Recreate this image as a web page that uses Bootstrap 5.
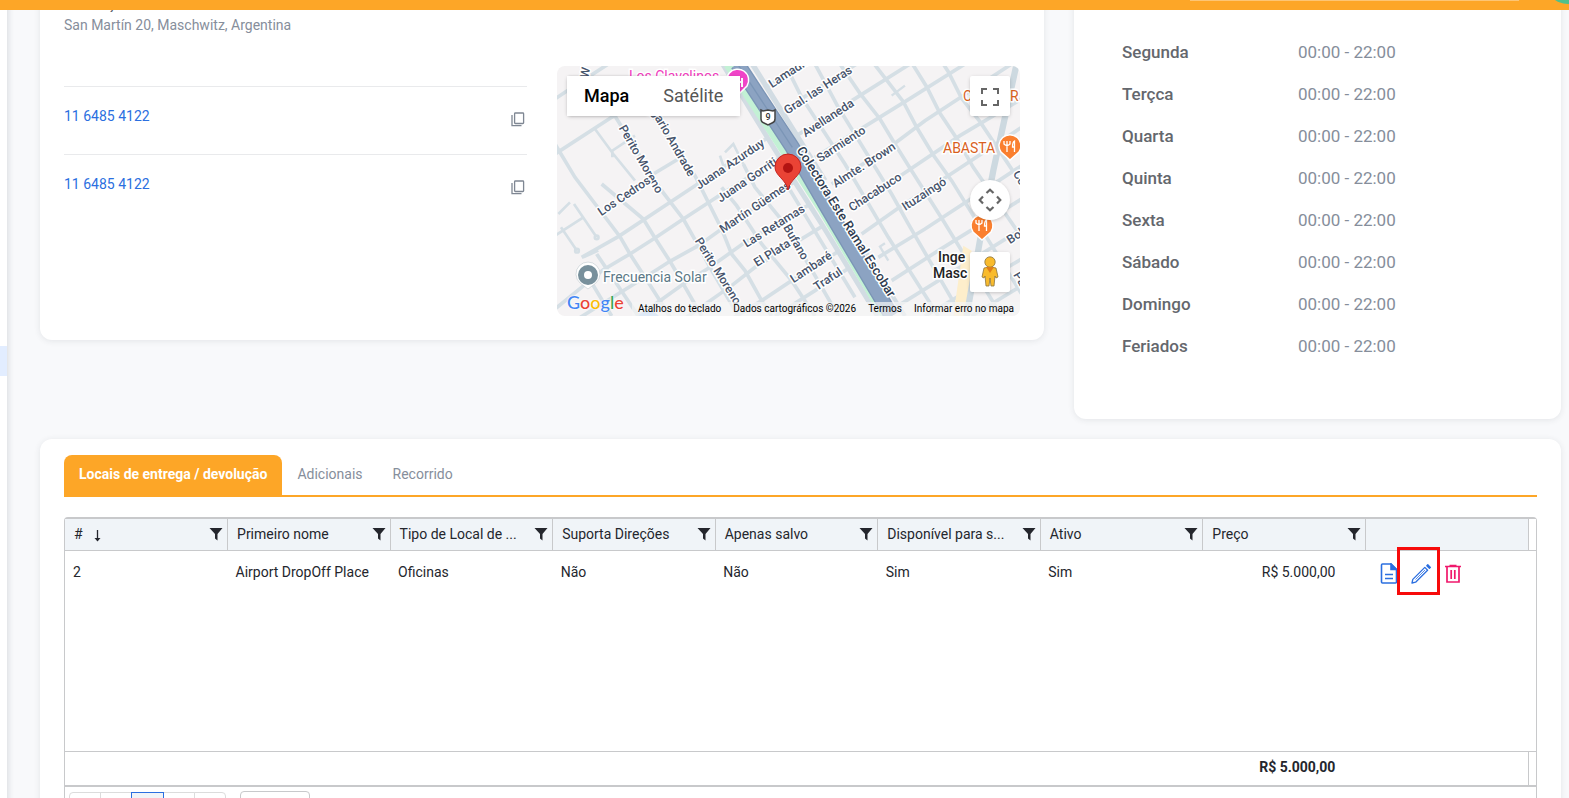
<!DOCTYPE html>
<html lang="pt">
<head>
<meta charset="utf-8">
<meta name="viewport" content="width=device-width, initial-scale=1">
<title>Local</title>
<link href="https://cdn.jsdelivr.net/npm/bootstrap@5.3.0/dist/css/bootstrap.min.css" rel="stylesheet">
<style>
:root{--brand:#fda627;--line:#c8c9cb;--link:#2b6fe0;--muted:#868e9b}
body{font-family:Roboto,"Open Sans",sans-serif;font-size:14px;line-height:20px;color:#24262d;background:#f8f9fb;height:100vh;overflow:hidden}
.topbar{height:10px;background:var(--brand);overflow:hidden}
.search-edge{width:21%;height:1px;margin-right:50px;background:#fdc574}
.avatar-edge{right:-22px;top:-42px;width:46px;height:46px;background:#4fc08d}
.side{width:7px;background:#fff;box-shadow:1px 0 6px rgba(40,50,60,.16);padding-top:346px}
.side-item{height:30px;background:#e2edff}
.content-area{padding:0 8px 0 33px;min-width:0}
.row-wide{--bs-gutter-x:30px}
.panel{background:#fff;border-radius:12px;box-shadow:0 1px 6px rgba(40,50,60,.1)}
.panel.cut{border-top-left-radius:0;border-top-right-radius:0}
.info-panel{padding:0 24px 24px}
.info-head{height:66px}
.info-head dt{font-weight:500;color:#5d6068;line-height:20px;margin-top:-6px}
.info-head dd{color:var(--muted);line-height:22px}
.phones{padding-top:20px}
.phone-row{border-top:1px solid #e9eaec;height:68px;padding:19px 0 0}
.phone-row a{color:var(--link)}
.icon-btn{border:0;background:none;padding:0;display:inline-flex}
.phone-row .icon-btn{margin:6px 2px 0 0}
.hours-panel{padding:31px 48px 52px}
.hours{font-size:17px;line-height:26px}
.hours th,.hours td{padding:8px 0;font-weight:400;color:var(--muted)}
.hours th{font-weight:500;color:#64676d;width:45%}
.map-box{height:250px;border-radius:8px;overflow:hidden;background:#f5f3f4}
.map-ctl{background:#fff;border:0;box-shadow:0 1px 4px -1px rgba(0,0,0,.3);padding:0}
.map-type{left:10px;top:10px;height:40px;border-radius:2px;font-size:18px}
.map-type button{border:0;background:#fff;padding:0 17px;color:#565656}
.map-type button:first-child{font-weight:500;color:#000;box-shadow:1px 0 2px rgba(0,0,0,.12)}
.sq{width:40px;height:40px;right:10px;border-radius:2px}
.sq-full{top:10px}
.sq-cam{top:114px}
.sq-peg{top:186px}
.legend{right:0;bottom:0;font-size:10px;line-height:14px;background:rgba(245,245,245,.7)}
.legend>*{padding:0 6px;border:0;background:none;color:#000;text-decoration:none;white-space:nowrap}
.glogo{left:10px;bottom:2px;font-family:Lato,sans-serif;font-weight:500;font-size:18px;line-height:24px;text-shadow:0 0 2px #fff,0 0 2px #fff}
.glogo .c1{color:#4285f4}
.glogo .c2{color:#ea4335}
.glogo .c3{color:#fbbc04}
.glogo .c4{color:#34a853}
.grid-panel{margin-top:20px;padding:16px 24px 40px}
.tabs{border-bottom:2px solid var(--brand);margin-bottom:20px}
.tabs button{border:0;background:none;height:40px;padding:0 15px 2px;color:var(--muted)}
.tabs .active{background:var(--brand);color:#fff;font-weight:700;border-radius:8px 8px 0 0}
.datagrid{border:1px solid var(--line);border-top:2px solid var(--line);border-radius:4px 4px 0 0}
.datagrid table{table-layout:fixed;margin:0}
.datagrid thead th{height:31px;background:#f0f4f8;border-right:1px solid var(--line);border-bottom:1px solid var(--line);font-weight:400;padding:0 4px 0 9px}
.datagrid thead th.gutter,.datagrid tfoot td.gutter{background:#fff;border-right:0;padding:0;border-left:0}
.datagrid tbody td{height:44px;padding:0 8px}
.datagrid tbody .blank td{height:157px}
.datagrid td.money{padding-right:30px;text-align:right}
.datagrid tfoot td{height:35px;border-top:1px solid var(--line);border-bottom:2px solid var(--line);font-weight:700;padding:0 0 2px}
.datagrid tfoot td.acts{border-right:1px solid var(--line)}
.gutter{width:8px}
.row-acts{gap:12px;padding:3px 0 0 7px}
.marker{width:43px;height:48px;left:32px;top:-4px;border:3px solid #f70b0b;pointer-events:none}
.pager{padding:5px 4px;gap:15px}
.pages button{width:32px;height:30px;border:1px solid #dcdcdc;background:#fff;margin-right:-1px;padding:0}
.pages button:first-child{border-radius:4px 0 0 4px}
.pages button:last-child{border-radius:0 4px 4px 0}
.pages .now{width:33px;border-color:var(--link);background:#f0f4f8;position:relative}
.pager select{width:70px;height:32px;margin-top:-1px;border:1px solid var(--line);border-radius:4px;background:#fff}
.st{fill:#46536b;font-size:12px;font-weight:500;text-anchor:middle;stroke:#fff;stroke-width:3px;stroke-linejoin:round;paint-order:stroke}
.st .main-road{font-size:13px;fill:#2e3a4e}
.poi{stroke:#fff;stroke-width:3px;paint-order:stroke;font-size:14px}
</style>
</head>
<body>
<header class="topbar fixed-top d-flex justify-content-end"><div class="search-edge"></div><span class="avatar-edge position-absolute rounded-circle"></span></header>
<div class="d-flex min-vh-100">
<aside class="side flex-shrink-0"><div class="side-item"></div></aside>
<main class="content-area flex-grow-1">
<div class="row row-wide align-items-start">
<div class="col-8">
<section class="panel cut info-panel">
<dl class="info-head mb-0 overflow-hidden"><dt>Endereço</dt><dd class="mb-0">San Martín 20, Maschwitz, Argentina</dd></dl>
<div class="row row-wide">
<div class="col-6"><div class="phones">
<div class="phone-row d-flex justify-content-between align-items-start"><a class="text-decoration-none" href="#">11 6485 4122</a><button class="icon-btn" aria-label="Copiar"><svg width="14" height="15" viewBox="0 0 14 15" fill="none" stroke="#7f8793" stroke-width="1.3"><rect x="3.6" y="1" width="9" height="10.5" rx=".8"/><path d="M1 3v10.600h9.500"/></svg></button></div>
<div class="phone-row d-flex justify-content-between align-items-start"><a class="text-decoration-none" href="#">11 6485 4122</a><button class="icon-btn" aria-label="Copiar"><svg width="14" height="15" viewBox="0 0 14 15" fill="none" stroke="#7f8793" stroke-width="1.3"><rect x="3.6" y="1" width="9" height="10.5" rx=".8"/><path d="M1 3v10.600h9.500"/></svg></button></div>
</div></div>
<div class="col-6"><div class="map-box position-relative">
<svg class="d-block w-100 h-100" viewBox="0 0 463 250" preserveAspectRatio="xMidYMid slice">
<defs>
<clipPath id="west"><path d="M0 0H505L600 160L730 370L960 756H0Z"/></clipPath>
<clipPath id="east"><path d="M590 0L730 230L1050 756H1400V0Z"/></clipPath>
</defs>
<g transform="translate(-2 -2) scale(.3333)" fill="none">
<g clip-path="url(#west)" stroke="#d5dfe5" stroke-width="11">
<path d="M80 580L190 518L410 372L670 200M0 735L145 617L225 570L300 522L385 465L500 390L700 265M60 770L270 640L345 592L430 545L500 495L740 340M230 770L315 710L385 660L465 610L570 535L800 400M380 770L530 665L600 610L830 470M490 790L620 710L710 650L870 550M660 756L780 680L900 600M0 270L170 160L270 100M0 105L30 85L160 0M270 345L370 285"/>
<path d="M0 240L60 340L195 518L225 570L270 640L315 710L345 760M125 570L250 756M140 360L265 465L300 522L345 592L385 660L440 756M170 140L320 380L385 465L430 545L465 610L550 756M290 150L420 335L500 495L530 570L570 620L620 710L650 756M500 370L545 425L620 540L710 650L780 756M565 300L600 370L690 480L760 600L850 756M700 370L900 700M100 640L170 756"/>
<path stroke-width="8" d="M120 195L175 270L240 350M172 280V260L240 215M495 275L510 320M510 265L535 240L565 300M0 515L85 460M57 420L125 520M18 490L66 560M10 450L45 415M85 580L130 560"/>
<circle cx="125" cy="520" r="4"/><circle cx="66" cy="560" r="4"/>
</g>
<g clip-path="url(#east)" stroke="#d5dfe5" stroke-width="11">
<path d="M640 66L740 0M690 135L905 0M725 215L930 85L1065 0M780 280L925 190L1055 110L1230 0M830 360L1010 245L1110 170L1370 0M880 430L1030 340L1215 215L1400 105M920 510L1040 425L1165 345L1400 190M970 580L1110 495L1400 305M1010 650L1150 560L1400 405M1030 725L1400 495M1110 756L1400 585M1250 756L1400 665"/>
<path d="M700 20L740 100L870 300L1000 520L1150 756M780 0L850 130L1010 390L1060 480L1220 756M855 0L915 88L975 165L1020 240L1070 320L1165 470L1340 756M950 -10L1045 113L1088 195L1135 273L1190 350L1400 690M1060 -20L1115 68L1155 148L1205 223L1255 310L1400 520M1145 -30L1180 23L1220 103L1275 173L1400 360"/>
<path stroke-width="7" d="M1010 95L1050 65M1000 590L975 548L990 538"/>
</g>
<path d="M1225 545L1250 560L1245 756H1195Z" fill="#fdeecb"/>
<path d="M1385 0L1315 320L1275 530L1235 756" stroke="#cdd9e0" stroke-width="19"/>
<path d="M250 756Q280 725 312 756Z" fill="#a9cdf9"/>
<path d="M503 0L600 160L730 370L800 480L968 756" stroke="#d2dce3" stroke-width="15"/>
<path d="M520 0L618 150L696 270L805 440L992 756" stroke="#c3f1d5" stroke-width="30"/>
<path d="M592 0L735 230L810 350" stroke="#d2dce3" stroke-width="16"/>
<path d="M930 560L1050 756" stroke="#d2dce3" stroke-width="12"/>
<path d="M548 0L712 250L822 440L1010 756" stroke="#7b95b6" stroke-width="46"/>
<path d="M548 0L712 250L822 440L1010 756" stroke="#8ca3c2" stroke-width="38"/>
<path d="M548 0L712 250" stroke="#7b95b6" stroke-width="4"/>
</g>
<g class="st">
<text transform="translate(84 93) rotate(60)" y="4">Perito Moreno</text>
<text transform="translate(112 69) rotate(60)" y="4">Olegario Andrade</text>
<text transform="translate(173 98) rotate(-34)" y="4">Juana Azurduy</text>
<text transform="translate(190 114) rotate(-34)" y="4">Juana Gorriti</text>
<text transform="translate(198 141) rotate(-34)" y="4">Martín Güemes</text>
<text transform="translate(67 130) rotate(-34)" y="4">Los Cedros</text>
<text transform="translate(217 160) rotate(-32)" y="4">Las Retamas</text>
<text transform="translate(215 187) rotate(-32)" y="4">El Plata</text>
<text transform="translate(239 176) rotate(60)" y="4">Bufano</text>
<text transform="translate(254 201) rotate(-33)" y="4">Lambaré</text>
<text transform="translate(271 213) rotate(-33)" y="4">Traful</text>
<text transform="translate(161 205) rotate(58)" y="4">Perito Moreno</text>
<text transform="translate(261 24) rotate(-33)" y="4">Gral. las Heras</text>
<text transform="translate(234 5) rotate(-33)" y="4">Lamadrid</text>
<text transform="translate(271 52) rotate(-33)" y="4">Avellaneda</text>
<text transform="translate(284 78) rotate(-33)" y="4">Sarmiento</text>
<text transform="translate(307 99) rotate(-33)" y="4">Almte. Brown</text>
<text transform="translate(318 126) rotate(-33)" y="4">Chacabuco</text>
<text transform="translate(367 128) rotate(-33)" y="4">Ituzaingó</text>
<text transform="translate(466 165) rotate(-33)" y="4">Bolívia</text>
<text transform="translate(467 119) rotate(60)" y="4">Colón</text>
<text transform="translate(469 223) rotate(60)" y="4">Paraná</text>
<text transform="translate(29 2) rotate(-80)" y="4">W c</text>
<text class="main-road" transform="translate(289 156) rotate(58)" y="4">Colectora Este Ramal Escobar</text>
</g>
<g class="poi">
<text x="72" y="15" fill="#f13bbd">Los Clavelinos</text>
<text x="406" y="35" fill="#d95f1e">C</text><text x="453" y="35" fill="#d95f1e">R</text>
<text x="386" y="87" fill="#d95f1e">ABASTA</text>
<text x="46" y="216" fill="#5b7886">Frecuencia Solar</text>
<g font-weight="500" fill="#222"><text x="381" y="196">Inge</text><text x="376" y="212">Masc</text></g>
</g>
<g stroke="#fff" stroke-width="1.500">
<path d="M180 30L173 22A11 11 0 1 1 190 20Z" fill="#f044c8"/>
<path d="M453 94L444 86A11 11 0 1 1 462 86Z" fill="#fa7f2f"/>
<path d="M425 174L416 166A11 11 0 1 1 434 166Z" fill="#fa7f2f"/>
</g>
<path d="M31 223L23 217A12 12 0 1 1 39 217Z" fill="#fff" stroke="#bfc8cc" stroke-width=".6"/>
<circle cx="31" cy="209" r="10" fill="#78909c"/><circle cx="31" cy="209" r="4" fill="#fff"/>
<path d="M176 11v10M185 12v9M176 16h8" stroke="#fff" stroke-width="2"/>
<g fill="none" stroke="#fff" stroke-width="1.300"><path d="M447 75v3q3 3 6 0v-3M450 75v11M457.500 86V75q-2 1-2 6h2"/><path d="M419 154v3q3 3 6 0v-3M422 154v11M429.500 165V154q-2 1-2 6h2"/></g>
<path d="M204 44l2 1 5-1 5 1 2-1v9q0 3-3 4l-4 2-4-2q-3-1-3-4z" fill="#fff" stroke="#444" stroke-width="1.500"/>
<text x="211" y="54" font-size="9" font-weight="500" text-anchor="middle" fill="#333">9</text>
<path d="M231 124C229 113 218 110 218 101A13 13 0 0 1 244 101C244 110 233 113 231 124Z" fill="#ea4335" stroke="#c5221f"/>
<circle cx="231" cy="102" r="5" fill="#b31412"/>
</svg>
<div class="map-ctl map-type position-absolute d-flex"><button>Mapa</button><button>Satélite</button></div>
<button class="map-ctl sq sq-full position-absolute" aria-label="Tela cheia"><svg width="18" height="18" viewBox="0 0 18 18" fill="#666"><path d="M0 0v6h2V2h4V0H0zm16 0h-4v2h4v4h2V0h-2zm0 16h-4v2h6v-6h-2v4zM2 12H0v6h6v-2H2v-4z"/></svg></button>
<button class="map-ctl sq sq-cam position-absolute rounded-circle" aria-label="Controles da câmera"><svg width="24" height="24" viewBox="0 0 24 24" fill="none" stroke="#666" stroke-width="2.200"><path d="M8.500 5L12 1.700 15.500 5M8.500 19L12 22.300 15.500 19M5 8.500L1.700 12 5 15.500M19 8.500L22.300 12 19 15.500"/></svg></button>
<button class="map-ctl sq sq-peg position-absolute" aria-label="Street View"><svg width="20" height="32" viewBox="0 0 20 32"><g fill="#f9bb2d" stroke="#8a7440" stroke-width=".8"><path d="M4 12q6-2 12 0l2 9-2 1-1-2-1 10h-3l-1-8-1 8H6L5 20l-1 2-2-1z"/><circle cx="10" cy="6" r="5.200"/></g><path d="M6 11h8l-4 6z" fill="#e07f1a"/></svg></button>
<div class="glogo position-absolute" aria-label="Google"><span class="c1">G</span><span class="c2">o</span><span class="c3">o</span><span class="c1">g</span><span class="c4">l</span><span class="c2">e</span></div>
<div class="legend position-absolute d-flex"><button>Atalhos do teclado</button><span>Dados cartográficos ©2026</span><a href="#">Termos</a><a href="#">Informar erro no mapa</a></div>
</div></div>
</div>
</section>
</div>
<div class="col-4">
<section class="panel cut hours-panel">
<table class="hours w-100"><tbody>
<tr><th scope="row">Segunda</th><td>00:00 - 22:00</td></tr>
<tr><th scope="row">Terçca</th><td>00:00 - 22:00</td></tr>
<tr><th scope="row">Quarta</th><td>00:00 - 22:00</td></tr>
<tr><th scope="row">Quinta</th><td>00:00 - 22:00</td></tr>
<tr><th scope="row">Sexta</th><td>00:00 - 22:00</td></tr>
<tr><th scope="row">Sábado</th><td>00:00 - 22:00</td></tr>
<tr><th scope="row">Domingo</th><td>00:00 - 22:00</td></tr>
<tr><th scope="row">Feriados</th><td>00:00 - 22:00</td></tr>
</tbody></table>
</section>
</div>
</div>
<section class="panel grid-panel">
<div class="tabs d-flex" role="tablist"><button class="active" role="tab">Locais de entrega / devolução</button><button role="tab">Adicionais</button><button role="tab">Recorrido</button></div>
<div class="datagrid">
<svg class="d-none"><symbol id="funnel" viewBox="0 0 14 14"><path d="M.500 1h13L8.500 7v6.500L6 11.500V7z" fill="#24262d"/></symbol></svg>
<table class="w-100">
<colgroup><col><col><col><col><col><col><col><col><col><col class="gutter"></colgroup>
<thead><tr>
<th><div class="d-flex align-items-center"><span class="flex-grow-1">#&nbsp;&nbsp; <svg width="9" height="12" viewBox="0 0 9 12" fill="none" stroke="#24262d" stroke-width="1.300"><path d="M4.500 0v10"/><path d="M1.500 8h6l-3 3.500z" fill="#24262d" stroke="none"/></svg></span><svg width="14" height="14"><use href="#funnel"/></svg></div></th>
<th><div class="d-flex align-items-center"><span class="flex-grow-1">Primeiro nome</span><svg width="14" height="14"><use href="#funnel"/></svg></div></th>
<th><div class="d-flex align-items-center"><span class="flex-grow-1">Tipo de Local de ...</span><svg width="14" height="14"><use href="#funnel"/></svg></div></th>
<th><div class="d-flex align-items-center"><span class="flex-grow-1">Suporta Direções</span><svg width="14" height="14"><use href="#funnel"/></svg></div></th>
<th><div class="d-flex align-items-center"><span class="flex-grow-1">Apenas salvo</span><svg width="14" height="14"><use href="#funnel"/></svg></div></th>
<th><div class="d-flex align-items-center"><span class="flex-grow-1">Disponível para s...</span><svg width="14" height="14"><use href="#funnel"/></svg></div></th>
<th><div class="d-flex align-items-center"><span class="flex-grow-1">Ativo</span><svg width="14" height="14"><use href="#funnel"/></svg></div></th>
<th><div class="d-flex align-items-center"><span class="flex-grow-1">Preço</span><svg width="14" height="14"><use href="#funnel"/></svg></div></th>
<th></th><th class="gutter"></th>
</tr></thead>
<tbody>
<tr><td>2</td><td>Airport DropOff Place</td><td>Oficinas</td><td>Não</td><td>Não</td><td>Sim</td><td>Sim</td><td class="money">R$ 5.000,00</td>
<td class="position-relative"><div class="row-acts d-flex align-items-center">
<button class="icon-btn" aria-label="Detalhes"><svg width="18" height="21" viewBox="0 0 18 21" fill="none" stroke="#2b6fe0" stroke-width="1.600"><path d="M2.500 1H11l5.500 5.500V19q0 1-1 1h-13q-1 0-1-1V2q0-1 1-1z"/><path d="M11 1v5.500h5.500z" fill="#2b6fe0"/><path d="M5 11.500h8M5 15.500h8"/></svg></button>
<button class="icon-btn" aria-label="Editar"><svg width="22" height="22" viewBox="0 0 22 22" fill="none" stroke="#2b6fe0" stroke-width="1.300" stroke-linejoin="round"><path d="M2 20l.8-3.600L14.800 4.400l2.800 2.800L5.600 19.200z"/><path d="M5.500 16.500L15 7" stroke-width=".8"/><path d="M16.800 2.800l1-1 2.600 2.600-1 1z" fill="#2b6fe0"/></svg></button>
<button class="icon-btn" aria-label="Excluir"><svg width="18" height="20" viewBox="0 0 18 20" fill="none" stroke="#f0186c" stroke-width="1.700"><path d="M1 2.500h16M5.500 1.500h7M3 2.500V18h12V2.500M7.200 6v9M10.800 6v9"/></svg></button>
</div><span class="marker position-absolute"></span></td><td class="p-0"></td></tr>
<tr class="blank"><td colspan="10"></td></tr>
</tbody>
<tfoot><tr><td></td><td></td><td></td><td></td><td></td><td></td><td></td><td class="money">R$ 5.000,00</td><td class="acts"></td><td class="gutter"></td></tr></tfoot>
</table>
<div class="pager d-flex align-items-start">
<div class="pages d-flex"><button aria-label="Primeira"></button><button aria-label="Anterior"></button><button class="now" aria-label="Página 1"></button><button aria-label="Próxima"></button><button aria-label="Última"></button></div>
<select aria-label="Itens por página"></select>
</div>
</div>
</section>
</main>
</div>
<script src="https://cdn.jsdelivr.net/npm/bootstrap@5.3.0/dist/js/bootstrap.bundle.min.js"></script>
</body>
</html>
